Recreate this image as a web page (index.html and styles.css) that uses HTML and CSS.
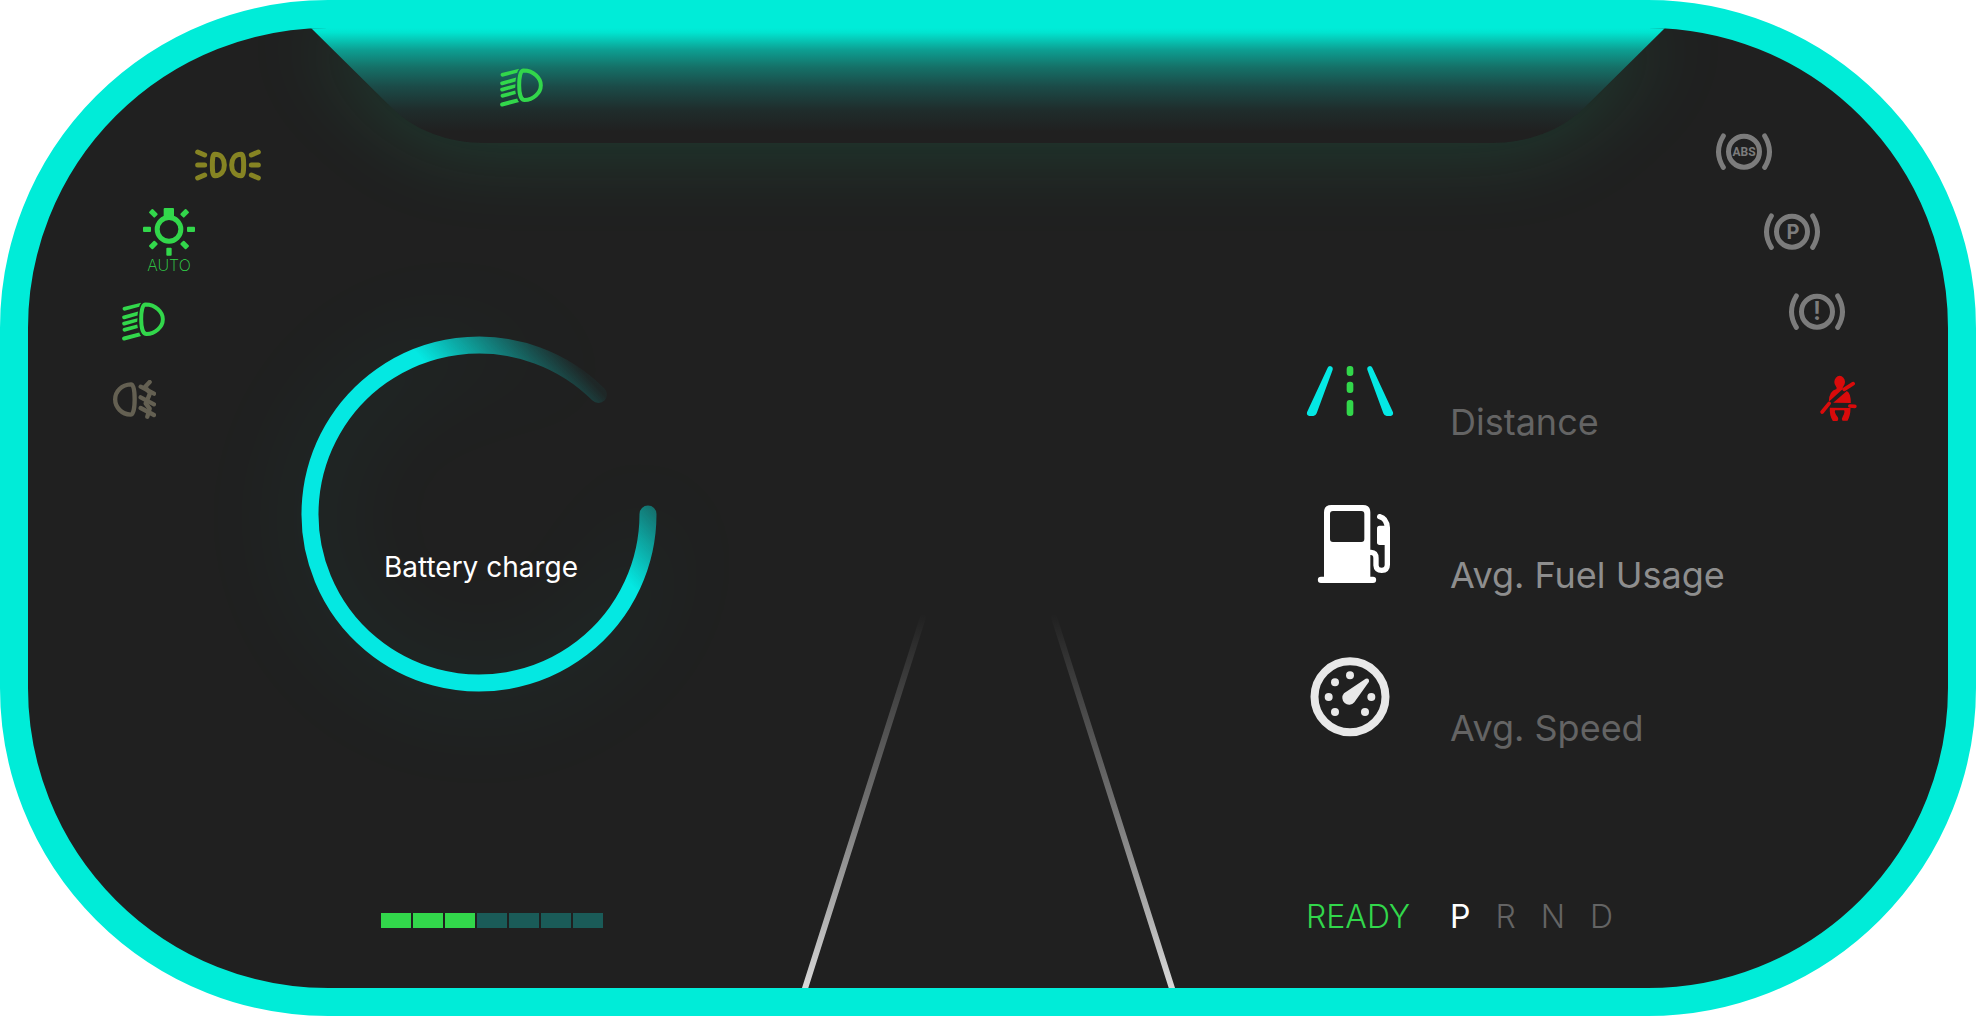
FILE: index.html
```html
<!DOCTYPE html>
<html lang="en">
<head>
<meta charset="utf-8">
<meta name="viewport" content="width=device-width, initial-scale=1">
<title>Instrument cluster</title>
<link rel="stylesheet" href="styles.css">
</head>
<body>
<main class="cluster">
  <ul class="telltales telltales-left">
    <li class="lamp lamp-parking">
      <svg width="66" height="32" viewBox="285 57 198 96" role="img" aria-label="Parking lights">
        <g fill="none" stroke="currentColor" stroke-linecap="round">
          <path stroke-width="15" d="M345 73C364 73 373 88 373 105C373 122 364 137 345 137C338 137 337 122 337 105C337 88 338 73 345 73ZM423 73C404 73 395 88 395 105C395 122 404 137 423 137C430 137 431 122 431 105C431 88 430 73 423 73Z"/>
          <path stroke-width="15" d="M293 66L314 75M293 105H314M293 144L314 135M475 66L454 75M475 105H454M475 144L454 135"/>
        </g>
      </svg>
    </li>
    <li class="lamp lamp-auto">
      <svg width="52" height="48" viewBox="129 231 156 144" aria-hidden="true">
        <circle cx="207" cy="295" r="35.500" fill="none" stroke="currentColor" stroke-width="15"/>
        <g fill="currentColor">
          <rect x="191" y="231" width="31" height="28" rx="3"/>
          <rect x="129" y="287" width="24" height="16" rx="3"/>
          <rect x="261" y="287" width="24" height="16" rx="3"/>
          <rect x="199" y="350" width="16" height="24" rx="3"/>
          <rect x="148" y="239" width="24" height="16" rx="3" transform="rotate(45 160 247)"/>
          <rect x="242" y="239" width="24" height="16" rx="3" transform="rotate(-45 254 247)"/>
          <rect x="148" y="334" width="24" height="16" rx="3" transform="rotate(-45 160 342)"/>
          <rect x="242" y="334" width="24" height="16" rx="3" transform="rotate(45 254 342)"/>
        </g>
      </svg>
      <span class="lamp-label">AUTO</span>
    </li>
    <li class="lamp lamp-low-beam">
      <svg width="43" height="39" role="img" aria-label="Low beam"><use href="#headlight"/></svg>
    </li>
    <li class="lamp lamp-rear-fog">
      <svg width="43" height="39" viewBox="39 270 129 117" role="img" aria-label="Rear fog light">
        <g fill="none" stroke="currentColor" stroke-width="13" stroke-linecap="round" stroke-linejoin="round">
          <path d="M93 283C65 284 45.500 304 45.500 328C45.500 352 65 373 92 374C101 374 104 350 104 328C104 302 101 283 93 283Z"/>
          <path d="M122 290L162 311M122 322L162 343M122 354L162 375"/>
          <path d="M149 276L135 291L150 309L146 320L137 340L149 356L142 380"/>
        </g>
      </svg>
    </li>
  </ul>

  <div class="center">
    <header class="hood">
      <svg class="hood-shape" viewBox="0 0 1355 115" preserveAspectRatio="none" aria-hidden="true">
        <defs>
          <linearGradient id="hood-fill" x1="0" y1="0" x2="0" y2="1">
            <stop offset="0" stop-color="#00ecd8"/>
            <stop offset=".04" stop-color="#01e4d0"/>
            <stop offset=".19" stop-color="#0d9f92"/>
            <stop offset=".34" stop-color="#157168"/>
            <stop offset=".51" stop-color="#1b4b48"/>
            <stop offset=".71" stop-color="#1f2d2c"/>
            <stop offset=".9" stop-color="#202020"/>
          </linearGradient>
          <symbol id="headlight" viewBox="66 36 130 118">
            <path d="M137 43.500C168 44 189.500 66 189.500 88C189.500 112 166 132 140 133C129 133 124 112 124 88C124 62 128 43.500 137 43.500Z" fill="none" stroke="currentColor" stroke-width="12"/>
            <path fill="currentColor" d="M71 51.500L124 38Q119 44 118 50L74 62.500A5.800 5.800 0 0 1 71 51.500ZM71 76.500L115 65Q113 71 113 77L74 88A5.800 5.800 0 0 1 71 76.500ZM71 95.500L113 85L112 96L74 107A5.800 5.800 0 0 1 71 95.500ZM71 115L112 104L114 115L74 126A5.800 5.800 0 0 1 71 115ZM71 140.500L118 128Q120 135 124 139L74 152.500A5.800 5.800 0 0 1 71 140.500Z"/>
          </symbol>
          <symbol id="brake" viewBox="76 70 172 111">
            <g fill="none" stroke="currentColor" stroke-width="15" stroke-linecap="round">
              <circle cx="162" cy="126" r="46.500"/>
              <path d="M100 79Q71 126 100 173M224 79Q253 126 224 173"/>
            </g>
          </symbol>
        </defs>
        <path d="M0 0L80 79C104 103 138 115 174 115H1181C1217 115 1251 103 1275 79L1355 0Z" fill="url(#hood-fill)"/>
      </svg>
      <svg class="hood-lamp" width="43" height="39" role="img" aria-label="Low beam on"><use href="#headlight"/></svg>
    </header>

    <div class="panels">
      <section class="battery">
        <div class="gauge">
          <svg class="gauge-ring" viewBox="0 0 356 356" aria-hidden="true">
            <defs>
              <linearGradient id="ring-fade" gradientUnits="userSpaceOnUse" x1="224" y1="134" x2="304" y2="60">
                <stop offset="0" stop-color="#04e8e2"/>
                <stop offset="1" stop-color="#04e8e2" stop-opacity=".04"/>
              </linearGradient>
            </defs>
            <path d="M347 178A169 169 0 1 1 297.500 58.500" fill="none" stroke="url(#ring-fade)" stroke-width="17" stroke-linecap="round"/>
          </svg>
          <h2 class="gauge-label">Battery charge</h2>
        </div>
        <div class="level" role="img" aria-label="3 of 7 bars">
          <span class="bar bar-on"></span>
          <span class="bar bar-on"></span>
          <span class="bar bar-on"></span>
          <span class="bar"></span>
          <span class="bar"></span>
          <span class="bar"></span>
          <span class="bar"></span>
        </div>
      </section>

      <svg class="road" viewBox="0 0 376 378" aria-hidden="true">
        <defs>
          <linearGradient id="road-fade" gradientUnits="userSpaceOnUse" x1="0" y1="4" x2="0" y2="378">
            <stop offset="0" stop-color="#fff" stop-opacity="0"/>
            <stop offset=".5" stop-color="#fff" stop-opacity=".36"/>
            <stop offset="1" stop-color="#fff" stop-opacity=".83"/>
          </linearGradient>
        </defs>
        <path d="M1 391L124 4M376 391L253 4" fill="none" stroke="url(#road-fade)" stroke-width="6"/>
      </svg>

      <section class="trip">
        <ul class="stats">
          <li class="stat">
            <span class="stat-icon">
              <svg width="88" height="52" viewBox="48 48 264 156" aria-hidden="true">
                <path id="lane" fill="#04e8e4" d="M120 51Q130 53 128 62L80 193Q77 201 70 201H58Q49 200 51 190L113 56Q115 51 120 51Z"/>
                <use href="#lane" transform="translate(360) scale(-1 1)"/>
                <g fill="#32d74b">
                  <rect x="170" y="51" width="20" height="30" rx="9"/>
                  <rect x="170" y="98" width="20" height="34" rx="9"/>
                  <rect x="170" y="153" width="20" height="48" rx="9"/>
                </g>
              </svg>
            </span>
            <span class="stat-name">Distance</span>
          </li>
          <li class="stat stat-current">
            <span class="stat-icon">
              <svg width="80" height="78" viewBox="60 471 240 234" aria-hidden="true">
                <path fill="#fff" fill-rule="evenodd" d="M102 493Q102 471 124 471H219Q241 471 241 493V686H249A9.500 9.500 0 0 1 249 705H93A9.500 9.500 0 0 1 93 686H102ZM129 489Q120 489 120 498V573Q120 582 129 582H214Q223 582 223 573V498Q223 489 214 489Z"/>
                <path fill="none" stroke="#fff" stroke-width="16" stroke-linecap="round" d="M236 613H243Q258 614 258 630V652Q259 667 275 667Q292 666 292 650V540Q290 511 269 506"/>
                <rect x="261" y="533" width="38" height="58" rx="8" fill="#fff"/>
              </svg>
            </span>
            <span class="stat-name">Avg. Fuel Usage</span>
          </li>
          <li class="stat">
            <span class="stat-icon">
              <svg width="80" height="80" viewBox="60 296 240 240" aria-hidden="true">
                <circle cx="180" cy="415.500" r="106.500" fill="none" stroke="#e8e8e8" stroke-width="24"/>
                <g fill="#e8e8e8">
                  <circle cx="180" cy="351" r="12"/>
                  <circle cx="135" cy="372" r="12"/>
                  <circle cx="116" cy="416" r="12"/>
                  <circle cx="244" cy="416" r="12"/>
                  <circle cx="135" cy="461" r="12"/>
                  <circle cx="225" cy="461" r="12"/>
                  <path d="M227 361Q238 358 237 370L193 432A19.500 19.500 0 1 1 162 405Z"/>
                </g>
              </svg>
            </span>
            <span class="stat-name">Avg. Speed</span>
          </li>
        </ul>
        <div class="drive">
          <strong class="ready">READY</strong>
          <ol class="gears">
            <li class="gear gear-current">P</li>
            <li class="gear">R</li>
            <li class="gear">N</li>
            <li class="gear">D</li>
          </ol>
        </div>
      </section>
    </div>
  </div>

  <ul class="telltales telltales-right">
    <li class="lamp lamp-abs">
      <svg width="58" height="37" viewBox="76 70 172 111">
        <use href="#brake" x="76" y="70" width="172" height="111"/>
        <text class="mark mark-abs" x="162" y="140">ABS</text>
      </svg>
    </li>
    <li class="lamp lamp-park">
      <svg width="58" height="37" viewBox="76 70 172 111">
        <use href="#brake" x="76" y="70" width="172" height="111"/>
        <text class="mark mark-park" x="165" y="148">P</text>
      </svg>
    </li>
    <li class="lamp lamp-brake">
      <svg width="58" height="37" viewBox="76 70 172 111">
        <use href="#brake" x="76" y="70" width="172" height="111"/>
        <text class="mark mark-brake" x="162" y="152">!</text>
      </svg>
    </li>
    <li class="lamp lamp-belt">
      <svg width="37" height="60" viewBox="209 276 110 180" role="img" aria-label="Fasten seat belt">
        <g fill="currentColor">
          <ellipse cx="267.500" cy="339" rx="16" ry="18.500"/>
          <path d="M258 352H277V360L235 398Q235 366 258 360ZM289 366Q301 372 301 402L248 401Z"/>
          <path d="M238 416L300 417Q300 440 291 455H276Q272 450 277 442Q284 430 281 424H254Q250 430 262 445Q266 452 261 456H247Q236 438 238 416Z"/>
        </g>
        <path fill="none" stroke="currentColor" stroke-width="11" stroke-linecap="round" d="M215 429L236 403M281 361L308 344M298 411L313 412"/>
      </svg>
    </li>
  </ul>
</main>
</body>
</html>
```
FILE: styles.css
```css
:root {
  --frame: #00ecd8;
  --panel: #202020;
  --green: #32d74b;
  --dim: #646464;
}

* {
  box-sizing: border-box;
}

body {
  margin: 0;
  background: #fff;
  color: #fff;
  font-family: Inter, "Liberation Sans", sans-serif;
  font-optical-sizing: none;
}

ul,
ol {
  margin: 0;
  padding: 0;
  list-style: none;
}

svg {
  display: block;
}

.cluster {
  display: grid;
  grid-template-columns: 273px minmax(0, 1fr) 273px;
  min-height: 100vh;
  overflow: hidden;
  border: 28px solid var(--frame);
  border-radius: 328px;
  background: var(--panel);
}

/* Warning and status lamps, fanned along the rounded corners */
.telltales {
  display: grid;
  align-content: start;
  align-items: center;
}

.telltales-left {
  grid-auto-rows: 78px;
  padding-top: 98px;
}

.telltales-right {
  grid-auto-rows: 80px;
  padding-top: 83px;
  color: #7c7c7c;
}

.lamp {
  justify-self: start;
}

.lamp-parking {
  margin-left: 167px;
  color: #868423;
}

.lamp-auto {
  margin-left: 115px;
  padding-bottom: 4px;
  color: var(--green);
}

.lamp-label {
  display: block;
  font-size: 16px;
  font-weight: 200;
  line-height: 18px;
  text-align: center;
}

.lamp-low-beam {
  margin-left: 94px;
  color: var(--green);
}

.lamp-rear-fog {
  margin-left: 85px;
  color: #646052;
}

.lamp-abs {
  margin-left: 40px;
}

.lamp-park {
  margin-left: 88px;
}

.lamp-brake {
  margin-left: 113px;
}

.lamp-belt {
  margin-left: 145px;
  color: #d90b0b;
}

.mark {
  fill: currentColor;
  text-anchor: middle;
}

.mark-abs {
  font: 700 36px Roboto, sans-serif;
}

.mark-park {
  font: 700 60px Inter, sans-serif;
}

.mark-brake {
  font: 600 75px Inter, sans-serif;
}

.center {
  display: flex;
  flex-direction: column;
}

.hood {
  position: relative;
  height: 115px;
  margin: 0 10px;
  padding: 40px 189px 0;
  color: var(--green);
}

.hood-shape {
  position: absolute;
  inset: 0;
  width: 100%;
  height: 100%;
  overflow: visible;
  filter: drop-shadow(0 4px 42px rgba(20, 236, 150, 0.15));
}

.hood-lamp {
  position: relative;
}

.panels {
  display: grid;
  flex: 1;
  grid-template-columns: minmax(0, 1fr) 376px minmax(0, 1fr);
}

.battery {
  display: flex;
  flex-direction: column;
  justify-content: space-between;
  padding: 193px 0 60px;
}

.gauge {
  display: grid;
  width: 356px;
}

.gauge-ring,
.gauge-label {
  grid-area: 1 / 1;
}

.gauge-ring {
  width: 356px;
  height: 356px;
  overflow: visible;
  filter: drop-shadow(0 4px 48px rgba(20, 236, 190, 0.14));
}

.gauge-label {
  z-index: 1;
  margin: 0;
  padding-top: 213px;
  padding-left: 4px;
  font-size: 28px;
  font-weight: 400;
  line-height: 36px;
  text-align: center;
}

.level {
  display: flex;
  gap: 2px;
  margin-left: 80px;
}

.bar {
  width: 30px;
  height: 15px;
  background: #1a5b58;
}

.bar-on {
  background: var(--green);
}

.road {
  align-self: end;
  width: 100%;
}

.trip {
  display: flex;
  flex-direction: column;
  justify-content: space-between;
  padding: 208px 0 51px 130px;
  white-space: nowrap;
}

.stats {
  display: grid;
  gap: 60px;
}

.stat {
  display: grid;
  grid-template-columns: 88px 1fr;
  column-gap: 56px;
  height: 93px;
  color: var(--dim);
}

.stat-current {
  color: #8e8e8e;
}

.stat-icon {
  display: grid;
  place-items: center;
  height: 80px;
}

.stat-name {
  align-self: end;
  font-size: 36px;
  font-weight: 400;
  line-height: 44px;
}

.drive {
  display: grid;
  grid-template-columns: 88px 1fr;
  column-gap: 56px;
  font-size: 32px;
  line-height: 40px;
}

.ready {
  color: var(--green);
  font-weight: 300;
}

.gears {
  display: flex;
  gap: 25px;
}

.gear {
  color: var(--dim);
  font-weight: 300;
}

.gear-current {
  color: #fff;
  font-weight: 400;
}
```
